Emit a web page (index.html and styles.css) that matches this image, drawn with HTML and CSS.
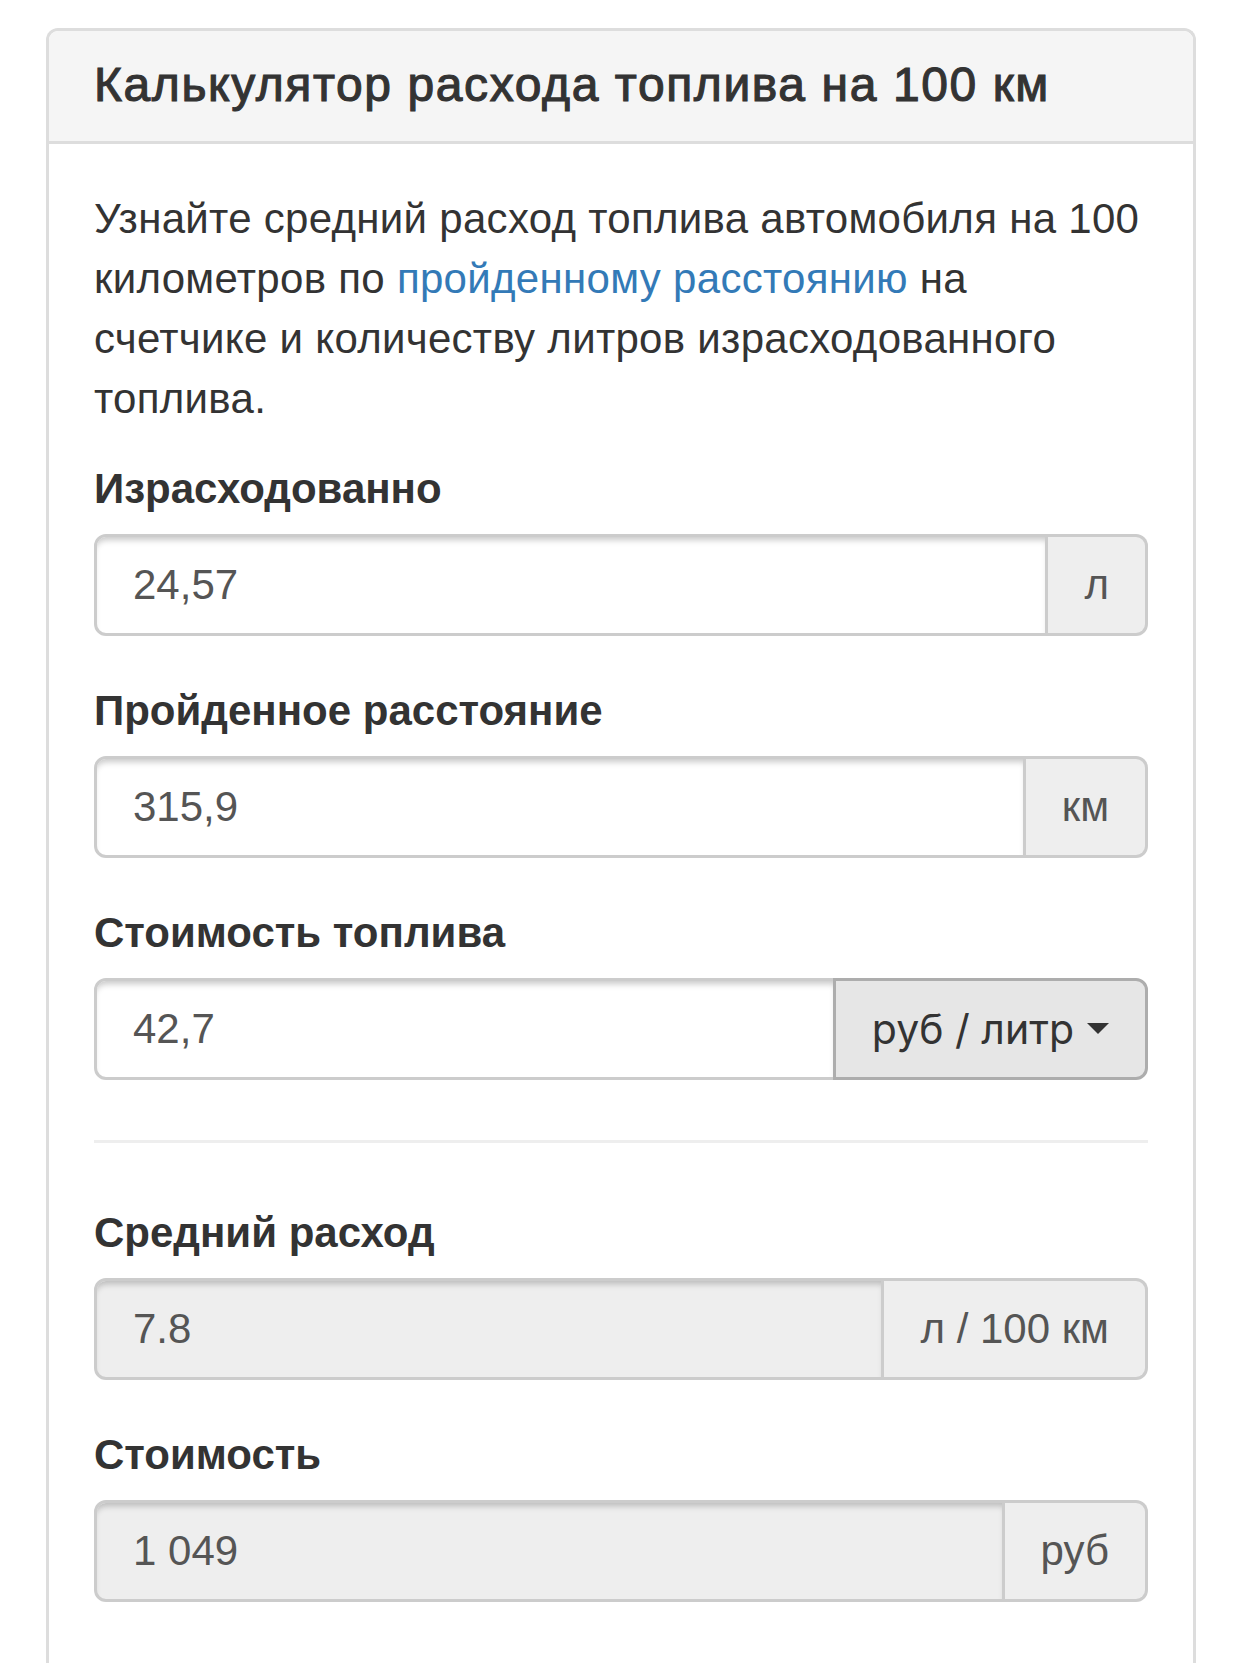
FILE: index.html
```html
<!DOCTYPE html>
<html lang="ru">

<head>
    <meta charset="UTF-8">
    <meta name="viewport" content="width=device-width, initial-scale=1.0">
    <title>Калькулятор расхода топлива на 100 км</title>
    <link rel="stylesheet" href="styles.css">
</head>

<body>
    <div class="container">
        <div class="panel">
            <div class="panel-heading">
                <h3 class="panel-title">Калькулятор расхода топлива на 100 км</h3>
            </div>
            <div class="panel-body">
                <p class="lead-text">
                    Узнайте средний расход топлива автомобиля на 100 километров по
                    <a href="#">пройденному расстоянию</a> на счетчике и количеству литров
                    израсходованного топлива.
                </p>

                <div class="form-group">
                    <label for="fuel">Израсходованно</label>
                    <div class="input-group">
                        <input id="fuel" class="form-control" type="text" value="24,57">
                        <span class="input-group-addon">л</span>
                    </div>
                </div>

                <div class="form-group">
                    <label for="distance">Пройденное расстояние</label>
                    <div class="input-group">
                        <input id="distance" class="form-control" type="text" value="315,9">
                        <span class="input-group-addon">км</span>
                    </div>
                </div>

                <div class="form-group">
                    <label for="price">Стоимость топлива</label>
                    <div class="input-group">
                        <input id="price" class="form-control" type="text" value="42,7">
                        <button class="btn-dropdown" type="button">руб / литр <span class="caret"></span></button>
                    </div>
                </div>

                <hr>

                <div class="form-group">
                    <label for="average">Средний расход</label>
                    <div class="input-group">
                        <input id="average" class="form-control" type="text" value="7.8" readonly>
                        <span class="input-group-addon">л / 100 км</span>
                    </div>
                </div>

                <div class="form-group">
                    <label for="cost">Стоимость</label>
                    <div class="input-group">
                        <input id="cost" class="form-control" type="text" value="1 049" readonly>
                        <span class="input-group-addon">руб</span>
                    </div>
                </div>
            </div>
        </div>
    </div>
</body>

</html>
```

FILE: styles.css
```css
:root {
    --text-color: #333;
    /* основной текст */
    --input-color: #555;
    /* текст в полях */
    --border-color: #ccc;
    --panel-border: #ddd;
    --heading-bg: #f5f5f5;
    --addon-bg: #eee;
    --link-color: #337ab7;
}

* {
    box-sizing: border-box;
}

body {
    margin: 0;
    font-family: "Liberation Sans", Arial, sans-serif;
    font-size: 42px;
    line-height: 60px;
    color: var(--text-color);
    background: white;
}

.container {
    padding: 28px 46px 0;
}

.panel {
    border: 3px solid var(--panel-border);
    border-bottom: none;
    border-radius: 12px 12px 0 0;
    min-height: 1640px;
}

.panel-heading {
    background: var(--heading-bg);
    border-bottom: 3px solid var(--panel-border);
    border-radius: 9px 9px 0 0;
    padding: 28px 45px 29px;
}

.panel-title {
    margin: 0;
    font-size: 48px;
    line-height: 1.1;
    font-weight: normal;
    letter-spacing: 1.6px;
    -webkit-text-stroke: 1.1px var(--text-color);
    color: var(--text-color);
}

.panel-body {
    padding: 45px;
}

.lead-text {
    margin: 0 0 30px;
    letter-spacing: 0.3px;
}

.lead-text a {
    color: var(--link-color);
    text-decoration: none;
}

.form-group {
    margin-bottom: 45px;
}

label {
    display: inline-block;
    margin-bottom: 15px;
    font-weight: bold;
}

.input-group {
    display: flex;
    height: 102px;
}

.form-control {
    flex: 1;
    min-width: 0;
    height: 102px;
    padding: 18px 36px;
    font-family: inherit;
    font-size: 42px;
    line-height: 60px;
    color: var(--input-color);
    background: white;
    border: 3px solid var(--border-color);
    border-radius: 12px 0 0 12px;
    box-shadow: inset 0 6px 6px -3px rgba(0, 0, 0, 0.22);
    outline: none;
    -webkit-appearance: none;
}

.form-control[readonly] {
    background: var(--addon-bg);
}

.input-group-addon {
    display: flex;
    align-items: center;
    padding: 0 36px;
    color: var(--input-color);
    background: var(--addon-bg);
    border: 3px solid var(--border-color);
    border-left: none;
    border-radius: 0 12px 12px 0;
    white-space: nowrap;
}

.btn-dropdown {
    display: flex;
    align-items: center;
    gap: 13px;
    margin-left: -3px;
    padding: 0 36px;
    font-family: Inter, "Liberation Sans", sans-serif;
    font-size: 41px;
    color: var(--text-color);
    background: #e6e6e6;
    border: 3px solid #adadad;
    border-radius: 0 12px 12px 0;
    cursor: pointer;
}

.caret {
    width: 0;
    height: 0;
    border-top: 11px solid var(--text-color);
    border-left: 11px solid transparent;
    border-right: 11px solid transparent;
}

hr {
    margin: 60px 0;
    border: none;
    border-top: 3px solid #eee;
}
```
